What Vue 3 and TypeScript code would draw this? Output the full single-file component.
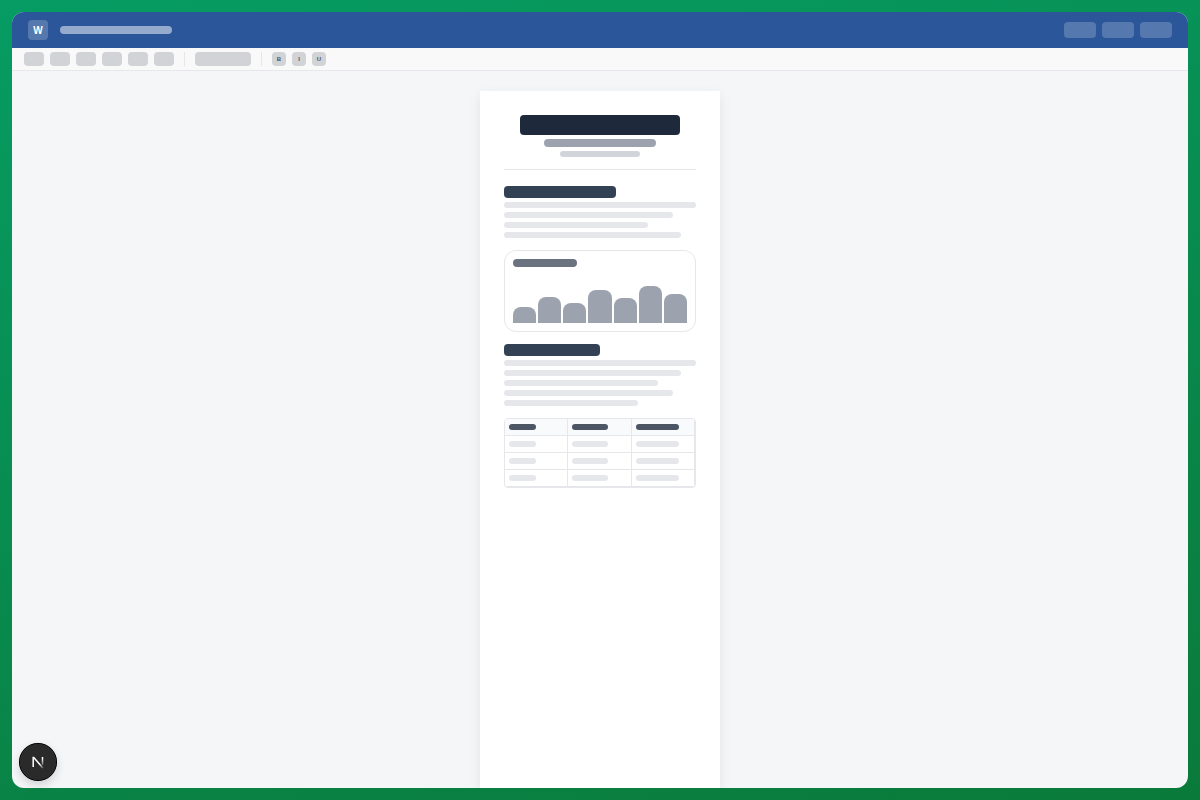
<template>
  <div class="desktop">
    <div class="window">
      <header class="titlebar">
        <div class="logo">W</div>
        <div class="doc-name"></div>
        <div class="title-actions">
          <span v-for="n in 3" :key="n" class="title-btn"></span>
        </div>
      </header>

      <div class="toolbar">
        <span v-for="n in 6" :key="n" class="tool"></span>
        <span class="sep"></span>
        <span class="tool-wide"></span>
        <span class="sep"></span>
        <div class="format">
          <span v-for="f in formats" :key="f" class="format-btn">{{ f }}</span>
        </div>
      </div>

      <main class="workspace">
        <article class="page">
          <div class="doc-head">
            <div class="doc-title"></div>
            <div class="doc-sub"></div>
            <div class="doc-meta"></div>
          </div>

          <div class="heading" style="width: 112px"></div>
          <div class="lines">
            <div v-for="(w, i) in firstLines" :key="i" class="line" :style="{ width: w + 'px' }"></div>
          </div>

          <section class="chart">
            <div class="chart-title"></div>
            <div class="bars">
              <div v-for="(b, i) in bars" :key="i" class="bar" :style="{ height: b + 'px' }"></div>
            </div>
          </section>

          <div class="heading" style="width: 96px"></div>
          <div class="lines">
            <div v-for="(w, i) in secondLines" :key="i" class="line" :style="{ width: w + 'px' }"></div>
          </div>

          <div class="table">
            <div v-for="(row, r) in 4" :key="row" class="row" :class="{ head: r === 0 }">
              <div v-for="(w, c) in colBars" :key="c" class="cell">
                <span class="cell-bar" :style="{ width: w + 'px' }"></span>
              </div>
            </div>
          </div>
        </article>
      </main>
    </div>

    <button class="dev-badge" aria-label="Next.js dev tools">
      <svg width="16" height="16" viewBox="0 0 16 16" fill="none">
        <defs>
          <linearGradient id="n-diag" x1="3" y1="3" x2="13" y2="14" gradientUnits="userSpaceOnUse">
            <stop offset="0.65" stop-color="#fff" />
            <stop offset="1" stop-color="#fff" stop-opacity="0.2" />
          </linearGradient>
          <linearGradient id="n-stem" x1="12.5" y1="3" x2="12.5" y2="11" gradientUnits="userSpaceOnUse">
            <stop offset="0.2" stop-color="#fff" />
            <stop offset="1" stop-color="#fff" stop-opacity="0.3" />
          </linearGradient>
        </defs>
        <path d="M3.2 13V3.4h.6L13 14.2" stroke="url(#n-diag)" stroke-width="1.5" />
        <path d="M12.5 3v8" stroke="url(#n-stem)" stroke-width="1.5" />
      </svg>
    </button>
  </div>
</template>

<script setup lang="ts">
const formats = ['B', 'I', 'U']
const firstLines = [192, 169, 144, 177]
const secondLines = [192, 177, 154, 169, 134]
const bars = [16, 26, 20, 33, 25, 37, 29]
const colBars = [27, 36, 43]
</script>

<style>
html,
body {
  margin: 0;
  padding: 0;
}
</style>

<style scoped>
.desktop {
  box-sizing: border-box;
  width: 1200px;
  height: 800px;
  padding: 12px;
  overflow: hidden;
  background: linear-gradient(165deg, #069c63, #0a7a3a);
  font-family: 'Liberation Sans', Arial, sans-serif;
  position: relative;
}

.window {
  display: flex;
  flex-direction: column;
  height: 776px;
  border-radius: 12px;
  overflow: hidden;
  background: #f4f6f8;
}

.titlebar {
  display: flex;
  align-items: center;
  flex: none;
  height: 36px;
  padding: 0 16px;
  background: #2b579a;
}

.logo {
  display: flex;
  align-items: center;
  justify-content: center;
  width: 20px;
  height: 20px;
  border-radius: 4px;
  background: rgba(255, 255, 255, 0.2);
  color: #fff;
  font-size: 10px;
  font-weight: 700;
}

.doc-name {
  width: 112px;
  height: 8px;
  margin-left: 12px;
  border-radius: 4px;
  background: rgba(255, 255, 255, 0.5);
}

.title-actions {
  display: flex;
  gap: 6px;
  margin-left: auto;
}

.title-btn {
  width: 32px;
  height: 16px;
  border-radius: 4px;
  background: rgba(255, 255, 255, 0.2);
}

.toolbar {
  display: flex;
  align-items: center;
  flex: none;
  gap: 6px;
  box-sizing: border-box;
  height: 23px;
  padding: 0 12px 1px;
  background: #f9f9f9;
  border-bottom: 1px solid #e5e7eb;
}

.tool {
  width: 20px;
  height: 14px;
  border-radius: 4px;
  background: #d1d3d7;
}

.tool-wide {
  width: 56px;
  height: 14px;
  border-radius: 4px;
  background: #d1d3d7;
}

.sep {
  width: 1px;
  height: 14px;
  margin: 0 4px;
  background: #e5e7eb;
}

.format {
  display: flex;
  gap: 6px;
}

.format-btn {
  display: flex;
  align-items: center;
  justify-content: center;
  width: 14px;
  height: 14px;
  border-radius: 4px;
  background: #d1d3d7;
  color: #4b5563;
  font-size: 6px;
  font-weight: 700;
}

.workspace {
  display: flex;
  justify-content: center;
  flex: 1;
  min-height: 0;
  padding-top: 20px;
}

.page {
  box-sizing: border-box;
  width: 240px;
  padding: 24px;
  background: #fff;
  box-shadow: 0 4px 12px rgba(0, 0, 0, 0.08);
}

.doc-head {
  display: flex;
  flex-direction: column;
  align-items: center;
  margin-bottom: 16px;
  padding-bottom: 12px;
  border-bottom: 1px solid #e5e7eb;
}

.doc-title {
  width: 160px;
  height: 20px;
  border-radius: 4px;
  background: #1e293b;
}

.doc-sub {
  width: 112px;
  height: 8px;
  margin-top: 4px;
  border-radius: 4px;
  background: #9ca3af;
}

.doc-meta {
  width: 80px;
  height: 6px;
  margin-top: 4px;
  border-radius: 3px;
  background: #d1d5db;
}

.heading {
  height: 12px;
  border-radius: 4px;
  background: #334155;
}

.lines {
  display: flex;
  flex-direction: column;
  gap: 4px;
  margin-top: 4px;
}

.line {
  height: 6px;
  border-radius: 3px;
  background: #e5e7eb;
}

.chart {
  box-sizing: border-box;
  height: 82px;
  margin: 12px 0;
  padding: 8px;
  border: 1px solid #e5e7eb;
  border-radius: 12px;
}

.chart-title {
  width: 64px;
  height: 8px;
  border-radius: 4px;
  background: #6b7280;
}

.bars {
  display: flex;
  align-items: flex-end;
  gap: 2px;
  height: 56px;
}

.bar {
  flex: 1;
  border-radius: 8px 8px 0 0;
  background: #9ca3af;
}

.table {
  box-sizing: border-box;
  height: 70px;
  margin-top: 12px;
  border: 1px solid #e5e7eb;
  border-radius: 4px;
  overflow: hidden;
}

.row {
  display: grid;
  grid-template-columns: 63px 64px 1fr;
  box-sizing: border-box;
  height: 17px;
  border-bottom: 1px solid #e5e7eb;
}

.row.head {
  background: #f9fafb;
}

.cell {
  display: flex;
  align-items: center;
  padding-left: 4px;
  border-right: 1px solid #e5e7eb;
}

.cell-bar {
  height: 6px;
  border-radius: 3px;
  background: #e5e7eb;
}

.head .cell-bar {
  background: #4b5563;
}

.dev-badge {
  position: absolute;
  left: 19px;
  top: 743px;
  display: flex;
  align-items: center;
  justify-content: center;
  box-sizing: border-box;
  width: 38px;
  height: 38px;
  padding: 0;
  border: 1px solid rgba(255, 255, 255, 0.25);
  outline: 1px solid #000;
  outline-offset: -1px;
  border-radius: 50%;
  background: #2a2a2a;
  box-shadow: 0 4px 10px rgba(0, 0, 0, 0.15);
}
</style>
